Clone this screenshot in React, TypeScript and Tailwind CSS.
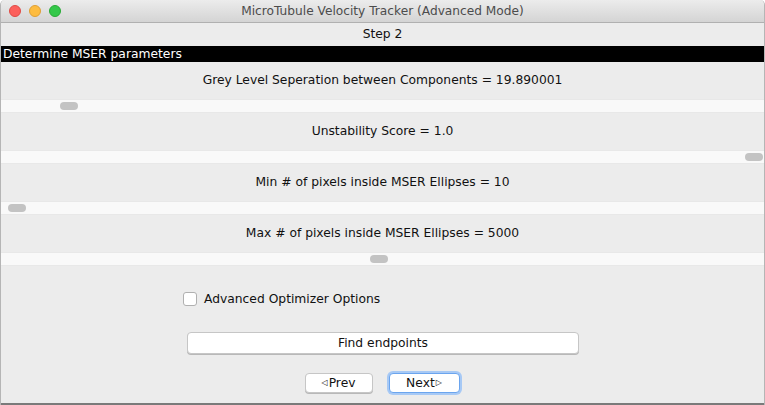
import React from "react";

const FONT = { fontFamily: '"DejaVu Sans", "Liberation Sans", sans-serif' };

function TrafficLights() {
  return (
    <div className="flex items-center gap-[8px] pl-[8px]">
      <span className="w-[12px] h-[12px] rounded-full bg-[#fc605c] border border-[#de4a45]" />
      <span className="w-[12px] h-[12px] rounded-full bg-[#fdbc40] border border-[#de9f34]" />
      <span className="w-[12px] h-[12px] rounded-full bg-[#34c84a] border border-[#27aa35]" />
    </div>
  );
}

function SliderSection({ label, thumbLeft }: { label: string; thumbLeft: number }) {
  return (
    <>
      <div className="h-[37px] flex items-center justify-center text-[12.3px] text-[#111]">
        {label}
      </div>
      <div className="h-[14px] bg-[#f9f9f9] border-y border-[#e8e8e8] flex items-center">
        <div
          className="w-[18px] h-[8px] rounded-full bg-[#c3c3c3]"
          style={{ marginLeft: thumbLeft }}
        />
      </div>
    </>
  );
}

export default function App() {
  const sliders = [
    { label: "Grey Level Seperation between Components = 19.890001", thumbLeft: 59 },
    { label: "Unstability Score = 1.0", thumbLeft: 744 },
    { label: "Min # of pixels inside MSER Ellipses = 10", thumbLeft: 7 },
    { label: "Max # of pixels inside MSER Ellipses = 5000", thumbLeft: 369 },
  ];

  return (
    <div
      className="w-[765px] h-[405px] flex flex-col bg-[#ececec] border-x border-[#b5b5b5] rounded-t-[5px] overflow-hidden"
      style={FONT}
    >
      {/* Title bar */}
      <div className="relative h-[23px] shrink-0 flex items-center bg-gradient-to-b from-[#ececec] to-[#d4d4d4] border-b border-[#b0b0b0]">
        <TrafficLights />
        <div className="absolute inset-0 flex items-center justify-center text-[12.2px] text-[#4c4c4c]">
          MicroTubule Velocity Tracker (Advanced Mode)
        </div>
      </div>

      {/* Step header */}
      <div className="h-[23px] shrink-0 flex items-center justify-center text-[12.3px] text-[#111]">
        Step 2
      </div>
      <div className="h-[16px] shrink-0 bg-black text-white text-[12.3px] flex items-center pl-[2px]">
        Determine MSER parameters
      </div>

      {/* Sliders */}
      {sliders.map((s) => (
        <SliderSection key={s.label} label={s.label} thumbLeft={s.thumbLeft} />
      ))}

      {/* Checkbox */}
      <div className="mt-[24px] flex items-center pl-[182px] gap-[7px] text-[12.3px] text-[#111]">
        <span className="w-[14px] h-[14px] rounded-[3px] bg-white border border-[#b0b0b0]" />
        Advanced Optimizer Options
      </div>

      {/* Find endpoints */}
      <div className="mt-[24px] pl-[186px]">
        <button className="w-[392px] h-[22px] bg-white border border-[#c6c6c6] rounded-[4px] shadow-[0_1px_0_#b8b8b8] text-[12.3px] text-[#111] flex items-center justify-center">
          Find endpoints
        </button>
      </div>

      {/* Navigation */}
      <div className="mt-[19px] flex items-center justify-center gap-[16px] pr-[1px]">
        <button className="w-[68px] h-[20px] bg-white border border-[#c6c6c6] rounded-[4px] shadow-[0_1px_0_#b8b8b8] text-[12.3px] text-[#111] flex items-center justify-center">
          <span className="text-[8px] mr-[1px]">◁</span>Prev
        </button>
        <button className="w-[71px] h-[20px] bg-white border border-[#6ba5ee] rounded-[4px] ring-2 ring-[#a7c9f5] text-[12.3px] text-[#111] flex items-center justify-center">
          Next<span className="text-[8px] ml-[1px]">▷</span>
        </button>
      </div>

      <div className="flex-1" />
      <div className="h-[2px] shrink-0 bg-[#7a7a7a]" />
    </div>
  );
}
